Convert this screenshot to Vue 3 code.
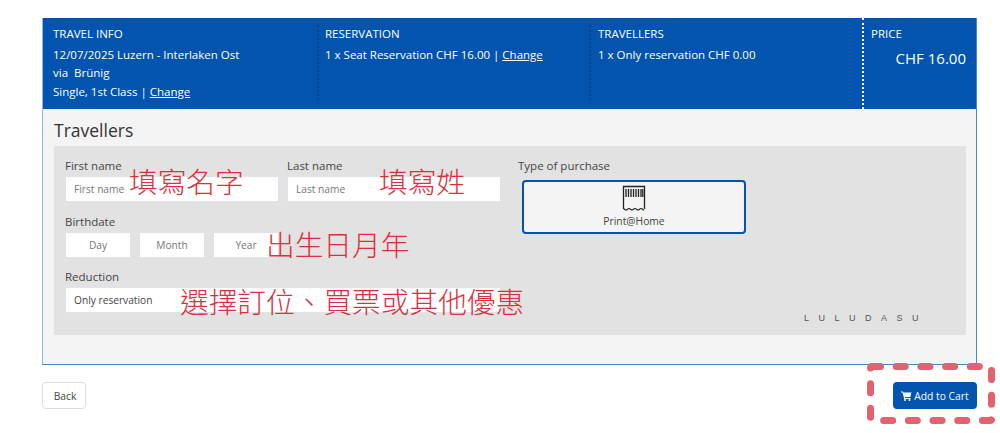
<template>
  <div class="page">
    <div class="panel">
      <div class="summary">
        <div class="col col-info">
          <div class="col-title">TRAVEL INFO</div>
          <div>12/07/2025 Luzern - Interlaken Ost</div>
          <div>via&nbsp; Brünig</div>
          <div>Single, 1st Class | <a href="#" @click.prevent>Change</a></div>
        </div>
        <div class="col col-res">
          <div class="col-title">RESERVATION</div>
          <div>1 x Seat Reservation CHF 16.00 | <a href="#" @click.prevent>Change</a></div>
        </div>
        <div class="col col-trav">
          <div class="col-title">TRAVELLERS</div>
          <div>1 x Only reservation CHF 0.00</div>
        </div>
        <div class="col col-price">
          <div class="col-title">PRICE</div>
          <div class="price">CHF 16.00</div>
        </div>
      </div>

      <div class="body">
        <h2>Travellers</h2>
        <div class="form-box">
          <div class="fields">
            <div class="row">
              <label class="field">
                <span>First name</span>
                <input placeholder="First name" />
              </label>
              <label class="field">
                <span>Last name</span>
                <input placeholder="Last name" />
              </label>
            </div>
            <div class="field">
              <span>Birthdate</span>
              <div class="date-row">
                <input class="date" placeholder="Day" />
                <input class="date" placeholder="Month" />
                <input class="date" placeholder="Year" />
              </div>
            </div>
            <label class="field">
              <span>Reduction</span>
              <div class="select">Only reservation</div>
            </label>
          </div>
          <div class="purchase">
            <span>Type of purchase</span>
            <div class="ticket">
              <svg width="24" height="26" viewBox="0 0 24 26" fill="none" stroke="#222">
                <path d="M1.500 24V1.500h21V24" stroke-width="1.300" />
                <path d="M1 23.500c1.500 0 1.500 1.500 3 1.500s1.500-1.500 3-1.500 1.500 1.500 3 1.500 1.500-1.500 3-1.500 1.500 1.500 3 1.500 1.500-1.500 3-1.500 1.500 1.500 3 1.500" stroke-width="1.100" />
                <path d="M4 4v8M6.500 4v8M9 4v8M11.500 4v8M14 4v8M16.500 4v8M19 4v8M20.800 4v8" stroke-width="1.300" />
              </svg>
              <span>Print@Home</span>
            </div>
          </div>
          <div class="watermark">LULUDASU</div>
        </div>
      </div>

      <span class="note note-first">填寫名字</span>
      <span class="note note-last">填寫姓</span>
      <span class="note note-birth">出生日月年</span>
      <span class="note note-reduction">選擇訂位、買票或其他優惠</span>
    </div>

    <div class="actions">
      <button class="btn-back">Back</button>
      <div class="cart-wrap">
        <button class="btn-cart">
          <svg width="11" height="10" viewBox="0 0 22 20" fill="#fff">
            <path d="M0 1h4l1 2h16l-2.500 9H7.500l.5 2h11v2H6.500L3 3H0z" />
            <circle cx="8" cy="18" r="2" />
            <circle cx="17" cy="18" r="2" />
          </svg>
          Add to Cart
        </button>
        <svg class="dashes" width="128" height="61" viewBox="0 0 128 61" fill="none">
          <rect x="3.500" y="3.500" width="121" height="54" rx="1" stroke="#e4626f" stroke-width="7" stroke-linecap="round" stroke-dasharray="9 15.700" />
        </svg>
      </div>
    </div>
  </div>
</template>

<script setup>
</script>

<style scoped>
.page {
  width: 1000px;
  height: 433px;
  padding: 18px 23px 0 42px;
  box-sizing: border-box;
  background: #fff;
  font-family: "Open Sans", "Noto Sans", sans-serif;
  color: #333;
  overflow: hidden;
}

.panel {
  position: relative;
  height: 347px;
  box-sizing: border-box;
  border: 1px solid #4a86c9;
  border-top: 0;
  border-left-color: #8fb6e6;
  background: #f4f4f4;
}

.summary {
  display: flex;
  height: 91px;
  background: #0354ae;
  color: #fff;
  font-size: 11.500px;
  line-height: 18.500px;
}

.summary a {
  color: #fff;
}

.col {
  box-sizing: border-box;
  padding-left: 10px;
}

.col-title {
  margin-bottom: 2px;
}

.col-info {
  width: 276px;
  margin: 7px 0 9px;
  border-right: 2px dotted #0a4385;
}

.col-res {
  width: 272px;
  margin: 7px 0 9px;
  padding-left: 6px;
  border-right: 2px dotted #0a4385;
}

.col-trav {
  width: 273px;
  padding-top: 7px;
  padding-left: 7px;
  border-right: 2px dotted #fff;
}

.col-price {
  flex: 1;
  padding-top: 7px;
  padding-left: 7px;
  padding-right: 10px;
}

.price {
  margin-top: 3px;
  text-align: right;
  font-size: 15px;
  line-height: 22px;
}

.body {
  padding: 9px 10px 0 11px;
}

h2 {
  margin: 0;
  height: 28px;
  font-size: 17.500px;
  font-weight: 400;
  line-height: 25px;
  color: #333;
}

.form-box {
  position: relative;
  display: flex;
  height: 189px;
  box-sizing: border-box;
  padding: 11px 11px 0;
  background: #e2e2e2;
  font-size: 11.500px;
}

.fields {
  display: flex;
  flex-direction: column;
  gap: 10.500px;
  width: 453px;
}

.row {
  display: flex;
  gap: 8px;
}

.field {
  display: block;
  width: 214px;
}

.field > span,
.purchase > span {
  display: block;
  height: 19px;
  line-height: 18.500px;
  color: #444;
}

input,
.select {
  display: block;
  width: 100%;
  height: 26px;
  box-sizing: border-box;
  padding: 0 8px;
  border: 1px solid #dfe3ea;
  border-radius: 0;
  background: #fff;
  font-family: inherit;
  font-size: 10.200px;
  line-height: 24px;
  color: #444;
  outline: none;
}

input::placeholder {
  color: #777;
  opacity: 1;
}

.select {
  width: 436px;
}

.date-row {
  display: flex;
  gap: 8px;
}

input.date {
  width: 66px;
  text-align: center;
}

.ticket {
  display: flex;
  flex-direction: column;
  align-items: center;
  width: 224px;
  height: 54px;
  margin: 4px 0 0 4px;
  padding-top: 3px;
  box-sizing: border-box;
  border: 2px solid #0354ae;
  border-radius: 4px;
  background: #f4f4f4;
}

.ticket span {
  margin-top: 3px;
  font-size: 10.300px;
  line-height: 14px;
  color: #444;
}

.watermark {
  position: absolute;
  right: 38px;
  bottom: 12px;
  font-family: "Liberation Sans", sans-serif;
  font-size: 9px;
  letter-spacing: 9.500px;
  color: #555;
}

.note {
  position: absolute;
  font-family: "Noto Sans CJK TC", sans-serif;
  font-size: 28.700px;
  font-weight: 300;
  line-height: 32px;
  color: #dc2f3c;
  white-space: nowrap;
}

.note-first {
  left: 86px;
  top: 147px;
}

.note-last {
  left: 336px;
  top: 147px;
}

.note-birth {
  left: 223px;
  top: 210px;
}

.note-reduction {
  left: 137px;
  top: 267px;
}

.actions {
  display: flex;
  justify-content: space-between;
  align-items: flex-start;
  padding-top: 17px;
}

.btn-back {
  width: 44px;
  height: 27px;
  padding: 0 0 0 2px;
  border: 1px solid #ddd;
  border-radius: 4px;
  background: #fff;
  font-family: inherit;
  font-size: 10.300px;
  color: #444;
}

.cart-wrap {
  position: relative;
}

.btn-cart {
  display: flex;
  align-items: center;
  justify-content: center;
  gap: 2px;
  width: 84px;
  height: 27px;
  padding: 0;
  border: 0;
  border-radius: 4px;
  background: #0354ae;
  font-family: inherit;
  font-size: 10.300px;
  color: #fff;
}

.dashes {
  position: absolute;
  left: -26px;
  top: -19px;
}
</style>
